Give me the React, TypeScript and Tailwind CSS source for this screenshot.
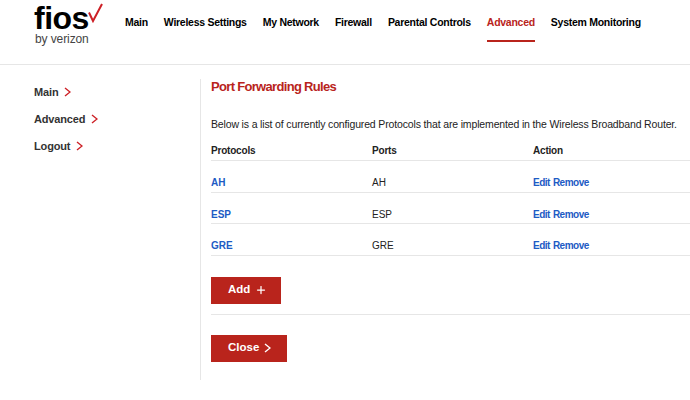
import { Plus } from "lucide-react";

const navItems = ["Main", "Wireless Settings", "My Network", "Firewall", "Parental Controls", "Advanced", "System Monitoring"];
const sideItems = ["Main", "Advanced", "Logout"];
const rows = ["AH", "ESP", "GRE"];

const Chevron = ({ color }: { color: string }) => (
  <svg width="7" height="10" viewBox="0 0 7 10" fill="none">
    <path d="M1 1 L6 5 L1 9" stroke={color} strokeWidth="1.4" />
  </svg>
);

const App = () => {
  return (
    <div className="w-[690px] h-[400px] overflow-hidden bg-white text-[#1a1a1a] font-['Liberation_Sans',Arial,sans-serif]">
      <header className="h-[65px] flex border-b border-[#e6e6e6]">
        <div className="w-[125px] pl-[34px] pt-[4px] shrink-0">
          <div className="relative w-[70px] h-[28px]">
            <span className="block text-[32px] leading-[28px] font-bold tracking-[-0.5px] text-black">fios</span>
            <svg className="absolute left-[54px] top-[-1px]" width="16" height="20" viewBox="0 0 16 20" fill="none">
              <path d="M1 9.5 L5 18 L14 1" stroke="#cd2026" strokeWidth="2" />
            </svg>
          </div>
          <div className="pl-[1px] text-[12px] leading-[14px] tracking-[-0.1px] text-[#444]">by verizon</div>
        </div>
        <nav className="flex gap-[16px] text-[10.5px] font-bold tracking-[-0.27px]">
          {navItems.map((item) => (
            <div
              key={item}
              className={
                item === "Advanced"
                  ? "h-[42px] pt-[15px] leading-[14px] border-b-[2px] border-[#b9241c] text-[#b9241c]"
                  : "h-[42px] pt-[15px] leading-[14px] text-black"
              }
            >
              {item}
            </div>
          ))}
        </nav>
      </header>

      <div className="flex pt-[14px]">
        <aside className="w-[201px] h-[301px] shrink-0 border-r border-[#e6e6e6] pl-[34px] pt-[6px] flex flex-col gap-[13px]">
          {sideItems.map((item) => (
            <div key={item} className="flex items-center h-[14px] gap-[6px] text-[11px] font-bold tracking-[-0.15px] text-[#333]">
              {item}
              <Chevron color="#cd2026" />
            </div>
          ))}
        </aside>

        <main className="flex-1 pl-[10px]">
          <h1 className="text-[13px] leading-[16px] font-bold tracking-[-0.68px] text-[#b9241c]">Port Forwarding Rules</h1>
          <p className="mt-[22px] text-[10.5px] leading-[14px] tracking-[-0.15px] whitespace-nowrap text-[#222]">
            Below is a list of currently configured Protocols that are implemented in the Wireless Broadband Router.
          </p>
          <div className="mt-[14px] h-[16px] grid grid-cols-[161px_161px_1fr] border-b border-[#e6e6e6] text-[10px] leading-[12px] font-bold tracking-[-0.2px] text-[#222]">
            <div>Protocols</div>
            <div>Ports</div>
            <div>Action</div>
          </div>
          {rows.map((row) => (
            <div key={row} className="h-[31.5px] pt-[16px] grid grid-cols-[161px_161px_1fr] border-b border-[#e6e6e6] text-[10px] leading-[12px]">
              <div className="font-bold text-[#1d5bc4]">{row}</div>
              <div className="text-[#222]">{row}</div>
              <div className="flex gap-[3px] font-bold text-[#1d5bc4] tracking-[-0.5px]">
                <span>Edit</span>
                <span>Remove</span>
              </div>
            </div>
          ))}
          <button className="mt-[21px] w-[70px] h-[27px] flex items-center pl-[17px] gap-[5px] bg-[#b9241c] text-white text-[11.5px] font-bold">
            Add <Plus size={12} strokeWidth={2.5} />
          </button>
          <div className="mt-[10px] border-t border-[#e6e6e6]" />
          <button className="mt-[20px] w-[76px] h-[27px] flex items-center pl-[17px] gap-[5px] bg-[#b9241c] text-white text-[11.5px] font-bold">
            Close <Chevron color="#ffffff" />
          </button>
        </main>
      </div>
    </div>
  );
};

export default App;
